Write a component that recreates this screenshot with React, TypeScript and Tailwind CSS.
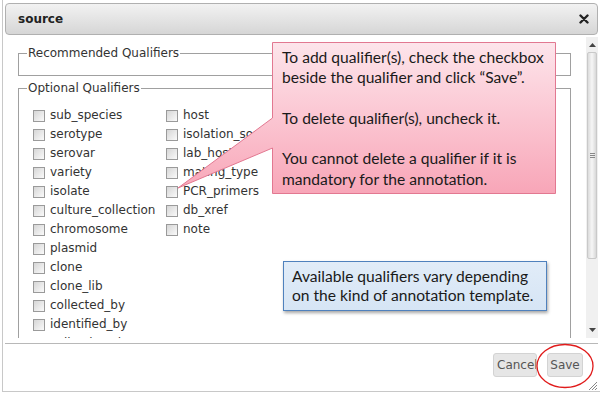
import React from "react";

const col1 = [
  "sub_species",
  "serotype",
  "serovar",
  "variety",
  "isolate",
  "culture_collection",
  "chromosome",
  "plasmid",
  "clone",
  "clone_lib",
  "collected_by",
  "identified_by",
  "collection_date",
];
const col2 = ["host", "isolation_source", "lab_host", "mating_type", "PCR_primers", "db_xref", "note"];

function Item({ label }: { label: string }) {
  return (
    <div className="flex h-[19px] items-center whitespace-nowrap">
      <span className="mr-[5px] box-border h-[12px] w-[12px] shrink-0 border border-[#9a9a9a] bg-gradient-to-br from-[#d6d6d6] to-[#fafafa]" />
      <span className="text-[12px] leading-[15px] text-[#333]">{label}</span>
    </div>
  );
}

export default function App() {
  return (
    <div
      className="relative h-[393px] w-[600px] overflow-hidden bg-white"
      style={{ fontFamily: '"DejaVu Sans", Verdana, sans-serif' }}
    >
      <div className="ml-[2px] flex h-[392px] flex-col border-b border-l border-[#c8c8c8] pl-[2px] pr-[2px] pt-[3px]">
        {/* title bar */}
        <div className="flex h-[32px] shrink-0 items-center justify-between rounded-[4px] border border-[#b0b0b0] bg-gradient-to-b from-[#f2f2f2] to-[#d6d6d6] pl-[12px] pr-[8px]">
          <span className="text-[12px] font-bold leading-[15px] text-[#222]">source</span>
          <svg width="10" height="10" viewBox="0 0 10 10">
            <path d="M1.5 1.5 L8.5 8.5 M8.5 1.5 L1.5 8.5" stroke="#222" strokeWidth="2.4" strokeLinecap="round" />
          </svg>
        </div>

        {/* content */}
        <div className="mt-[2px] flex h-[301px] shrink-0">
          <div className="flex-1 overflow-hidden pl-[13px] pr-[15px]">
            <fieldset className="mt-[9px] border border-[#a0a0a0]">
              <legend className="ml-[8px] px-[1px] text-[12px] leading-[15px] text-[#333]">Recommended Qualifiers</legend>
              <div className="h-[14px]" />
            </fieldset>
            <fieldset className="mt-[5px] border border-[#a0a0a0]">
              <legend className="ml-[8px] px-[1px] text-[12px] leading-[15px] text-[#333]">Optional Qualifiers</legend>
              <div className="flex pl-[14px] pt-[10px]">
                <div className="w-[133px]">
                  {col1.map((l) => (
                    <Item key={l} label={l} />
                  ))}
                </div>
                <div>
                  {col2.map((l) => (
                    <Item key={l} label={l} />
                  ))}
                </div>
              </div>
            </fieldset>
          </div>
          {/* scrollbar */}
          <div className="flex w-[12px] flex-col bg-[#f0f0f0]">
            <div className="flex h-[15px] items-center justify-center">
              <svg width="7" height="4" viewBox="0 0 7 4">
                <path d="M0 4 L3.5 0 L7 4 Z" fill="#444" />
              </svg>
            </div>
            <div className="mx-[1px] flex h-[207px] items-center justify-center rounded-[2px] border border-[#c9c9c9] bg-gradient-to-r from-[#dcdcdc] via-[#f6f6f6] to-[#d8d8d8]">
              <div className="flex flex-col gap-[1px]">
                <div className="h-[1px] w-[5px] bg-[#888]" />
                <div className="h-[1px] w-[5px] bg-[#888]" />
                <div className="h-[1px] w-[5px] bg-[#888]" />
              </div>
            </div>
            <div className="flex-1" />
            <div className="flex h-[16px] items-center justify-center">
              <svg width="7" height="4" viewBox="0 0 7 4">
                <path d="M0 0 L3.5 4 L7 0 Z" fill="#444" />
              </svg>
            </div>
          </div>
        </div>

        {/* footer */}
        <div className="mt-[5px] flex flex-1 justify-end border-t border-[#b8b8b8] pr-[15px] pt-[9px]">
          <div className="flex h-[24px] gap-[10px]">
            <div className="box-border flex h-[24px] w-[44px] items-center overflow-hidden whitespace-nowrap rounded-[3px] border border-[#d3d3d3] bg-[#e6e6e6] pl-[3px] text-[12px] text-[#555]">
              Cancel
            </div>
            <div className="box-border flex h-[24px] w-[36px] items-center justify-center rounded-[3px] border border-[#d3d3d3] bg-[#e6e6e6] text-[12px] text-[#555]">
              Save
            </div>
          </div>
        </div>
      </div>

      {/* resize handle */}
      <svg className="absolute left-[587px] top-[380px]" width="11" height="11" viewBox="0 0 11 11">
        <path d="M10 2 L2 10 M10 5 L5 10 M10 8 L8 10" stroke="#888" strokeWidth="1" />
      </svg>

      {/* red ellipse */}
      <svg className="pointer-events-none absolute left-0 top-0" width="600" height="393" viewBox="0 0 600 393">
        <ellipse cx="565" cy="366" rx="28" ry="21.5" fill="none" stroke="#e01b1b" strokeWidth="1.3" />
      </svg>

      {/* pink callout */}
      <svg className="pointer-events-none absolute left-0 top-0" width="600" height="393" viewBox="0 0 600 393">
        <defs>
          <linearGradient id="pink" x1="0" y1="42" x2="0" y2="193" gradientUnits="userSpaceOnUse">
            <stop offset="0" stopColor="#fde5eb" />
            <stop offset="0.5" stopColor="#fbc6d2" />
            <stop offset="1" stopColor="#f8a6b8" />
          </linearGradient>
        </defs>
        <path
          d="M272.5 42.5 H555.5 V193.5 H272.5 V148 L178 188 L272.5 118 Z"
          fill="url(#pink)"
          stroke="#e27891"
          strokeWidth="1"
        />
      </svg>
      <div
        className="absolute left-[282px] top-[47px] text-[15.6px] leading-[20.3px] text-[#1a1a1a]"
        style={{ fontFamily: 'Lato, "Open Sans", sans-serif' }}
      >
        <div>To add qualifier(s), check the checkbox</div>
        <div>beside the qualifier and click “Save”.</div>
        <div>&nbsp;</div>
        <div>To delete qualifier(s), uncheck it.</div>
        <div>&nbsp;</div>
        <div>You cannot delete a qualifier if it is</div>
        <div>mandatory for the annotation.</div>
      </div>

      {/* blue callout */}
      <div
        className="absolute left-[283px] top-[261px] box-border h-[50px] w-[264px] whitespace-nowrap border border-[#4f81bd] bg-gradient-to-b from-[#e1ecf8] to-[#d6e5f5] pl-[8px] pt-[5px] text-[15.6px] leading-[19px] text-[#1a1a1a] shadow-[1px_2px_3px_rgba(0,0,0,0.35)]"
        style={{ fontFamily: 'Lato, "Open Sans", sans-serif' }}
      >
        <div>Available qualifiers vary depending</div>
        <div>on the kind of annotation template.</div>
      </div>
    </div>
  );
}
